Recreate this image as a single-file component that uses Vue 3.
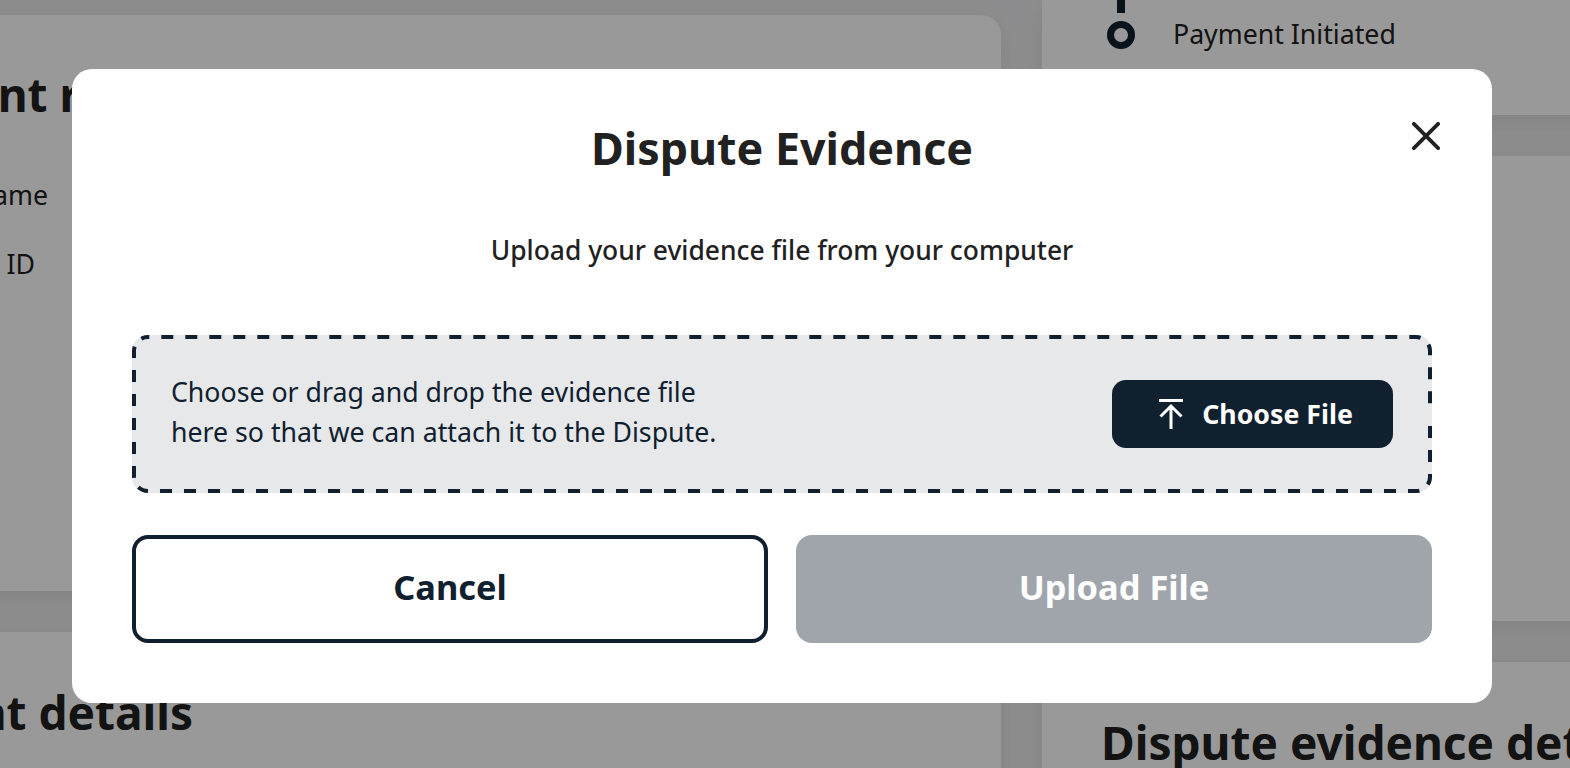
<script setup>
const rows = ['Merchant Name', 'Transaction ID']
</script>

<template>
  <div class="page">
    <div class="left">
      <section class="card request">
        <h2>Payment request</h2>
        <div class="rows">
          <div v-for="r in rows" :key="r" class="row">{{ r }}</div>
        </div>
      </section>
      <section class="card details">
        <h2>Payment details</h2>
      </section>
    </div>
    <div class="right">
      <section class="card timeline">
        <div class="stem"></div>
        <div class="step">
          <span class="dot"></span>
          <span class="step-label">Payment Initiated</span>
        </div>
      </section>
      <section class="card middle"></section>
      <section class="card evidence">
        <h2>Dispute evidence details</h2>
      </section>
    </div>

    <div class="overlay">
      <div class="modal">
        <button class="close" aria-label="Close">
          <svg width="28" height="28" viewBox="0 0 28 28" fill="none" stroke="#212121" stroke-width="3.8" stroke-linecap="round">
            <path d="M1.9 1.9l24.2 24.2M26.1 1.9L1.9 26.1" />
          </svg>
        </button>
        <h1>Dispute Evidence</h1>
        <p class="sub">Upload your evidence file from your computer</p>
        <div class="drop">
          <svg class="dash" width="1300" height="158" viewBox="0 0 1300 158" fill="none" stroke="#10202f" stroke-width="8" stroke-dasharray="12 12">
            <path d="M16 0H1284A16 16 0 0 1 1300 16V70" stroke-dashoffset="10.7" />
            <path d="M1300 91V142A16 16 0 0 1 1284 158H16A16 16 0 0 1 0 142V16A16 16 0 0 1 16 0" />
          </svg>
          <p>Choose or drag and drop the evidence file<br>here so that we can attach it to the Dispute.</p>
          <button class="choose">
            <svg width="24" height="30" viewBox="0 0 24 30" fill="none" stroke="#fff" stroke-width="3">
              <path d="M0 1.5h24" />
              <path d="M12 30V7M1.5 17.5L12 7l10.5 10.5" />
            </svg>
            Choose File
          </button>
        </div>
        <div class="actions">
          <button class="btn cancel">Cancel</button>
          <button class="btn upload">Upload File</button>
        </div>
      </div>
    </div>
  </div>
</template>

<style scoped>
.page {
  position: relative;
  width: 1570px;
  height: 768px;
  overflow: hidden;
  display: flex;
  gap: 41px;
  background: #ececee;
  font-family: "Noto Sans", sans-serif;
  color: #212121;
}
.left {
  flex: none;
  width: 1401px;
  margin-left: -400px;
  padding-top: 15px;
  display: flex;
  flex-direction: column;
  gap: 41px;
}
.right {
  flex: 1;
  min-width: 0;
  display: flex;
  flex-direction: column;
  gap: 41px;
  margin-right: -100px;
}
.card {
  flex: none;
  background: #fff;
  border-radius: 20px;
  box-shadow: 0 6px 24px rgba(0, 0, 0, 0.08);
}
h2 {
  margin: 0;
  font-size: 46px;
  line-height: 60px;
  font-weight: 700;
  white-space: nowrap;
}
.request {
  height: 576px;
  padding: 49px 0 0 243px;
  box-sizing: border-box;
}
.rows {
  margin-top: 53px;
  margin-left: -243px;
  width: 448px;
}
.row {
  font-size: 26.7px;
  line-height: 36px;
  height: 69px;
  text-align: right;
  white-space: nowrap;
}
.row + .row {
  padding-right: 13px;
}
.details {
  height: 200px;
  padding: 50px 0 0 222px;
  box-sizing: border-box;
}
.timeline {
  height: 115px;
  padding-left: 65px;
  box-sizing: border-box;
  border-radius: 0 0 20px 20px;
}
.stem {
  width: 8px;
  height: 13px;
  margin-left: 10px;
  background: #10202f;
}
.step {
  display: flex;
  align-items: center;
  gap: 38px;
  margin-top: 7px;
  font-size: 26.7px;
  line-height: 28px;
}
.step-label {
  margin-bottom: 2px;
}
.dot {
  width: 28px;
  height: 28px;
  border: 7px solid #10202f;
  border-radius: 50%;
  box-sizing: border-box;
}
.middle {
  height: 465px;
}
.evidence {
  height: 200px;
  padding: 50px 0 0 59px;
  box-sizing: border-box;
}
.overlay {
  position: absolute;
  inset: 0;
  background: rgba(0, 0, 0, 0.4);
}
.modal {
  position: absolute;
  left: 72px;
  top: 69px;
  width: 1420px;
  height: 634px;
  box-sizing: border-box;
  padding: 48px 60px 0;
  background: #fff;
  border-radius: 20px;
}
h1 {
  margin: 0;
  text-align: center;
  font-size: 44.8px;
  line-height: 62px;
  font-weight: 700;
}
.sub {
  margin: 53px 0 0;
  text-align: center;
  font-size: 26.4px;
  line-height: 36px;
  font-weight: 500;
}
.close {
  position: absolute;
  top: 53px;
  right: 52px;
  padding: 0;
  border: 0;
  background: none;
  line-height: 0;
}
.drop {
  position: relative;
  margin-top: 67px;
  height: 158px;
  box-sizing: border-box;
  padding: 0 39px;
  display: flex;
  align-items: center;
  justify-content: space-between;
  background: #e6e8ea;
  border-radius: 16px;
  color: #10202f;
}
.dash {
  position: absolute;
  left: 0;
  top: 0;
  border-radius: 16px;
}
.drop p {
  position: relative;
  margin: 0 0 4px;
  font-size: 26.7px;
  line-height: 40px;
}
.choose {
  position: relative;
  width: 281px;
  height: 68px;
  display: flex;
  align-items: center;
  justify-content: center;
  gap: 19px;
  padding: 0 0 2px 7px;
  border: 0;
  border-radius: 14px;
  background: #10202f;
  color: #fff;
  font: 700 26.7px "Noto Sans", sans-serif;
}
.choose svg {
  margin-top: 2px;
}
.actions {
  margin-top: 42px;
  display: grid;
  grid-template-columns: 1fr 1fr;
  gap: 28px;
}
.btn {
  height: 108px;
  box-sizing: border-box;
  padding: 0 0 6px;
  border-radius: 16px;
  font: 700 34.4px "Noto Sans", sans-serif;
}
.cancel {
  background: #fff;
  border: 4px solid #10202f;
  color: #10202f;
}
.upload {
  background: #a0a5ac;
  border: 0;
  color: #fff;
}
</style>
